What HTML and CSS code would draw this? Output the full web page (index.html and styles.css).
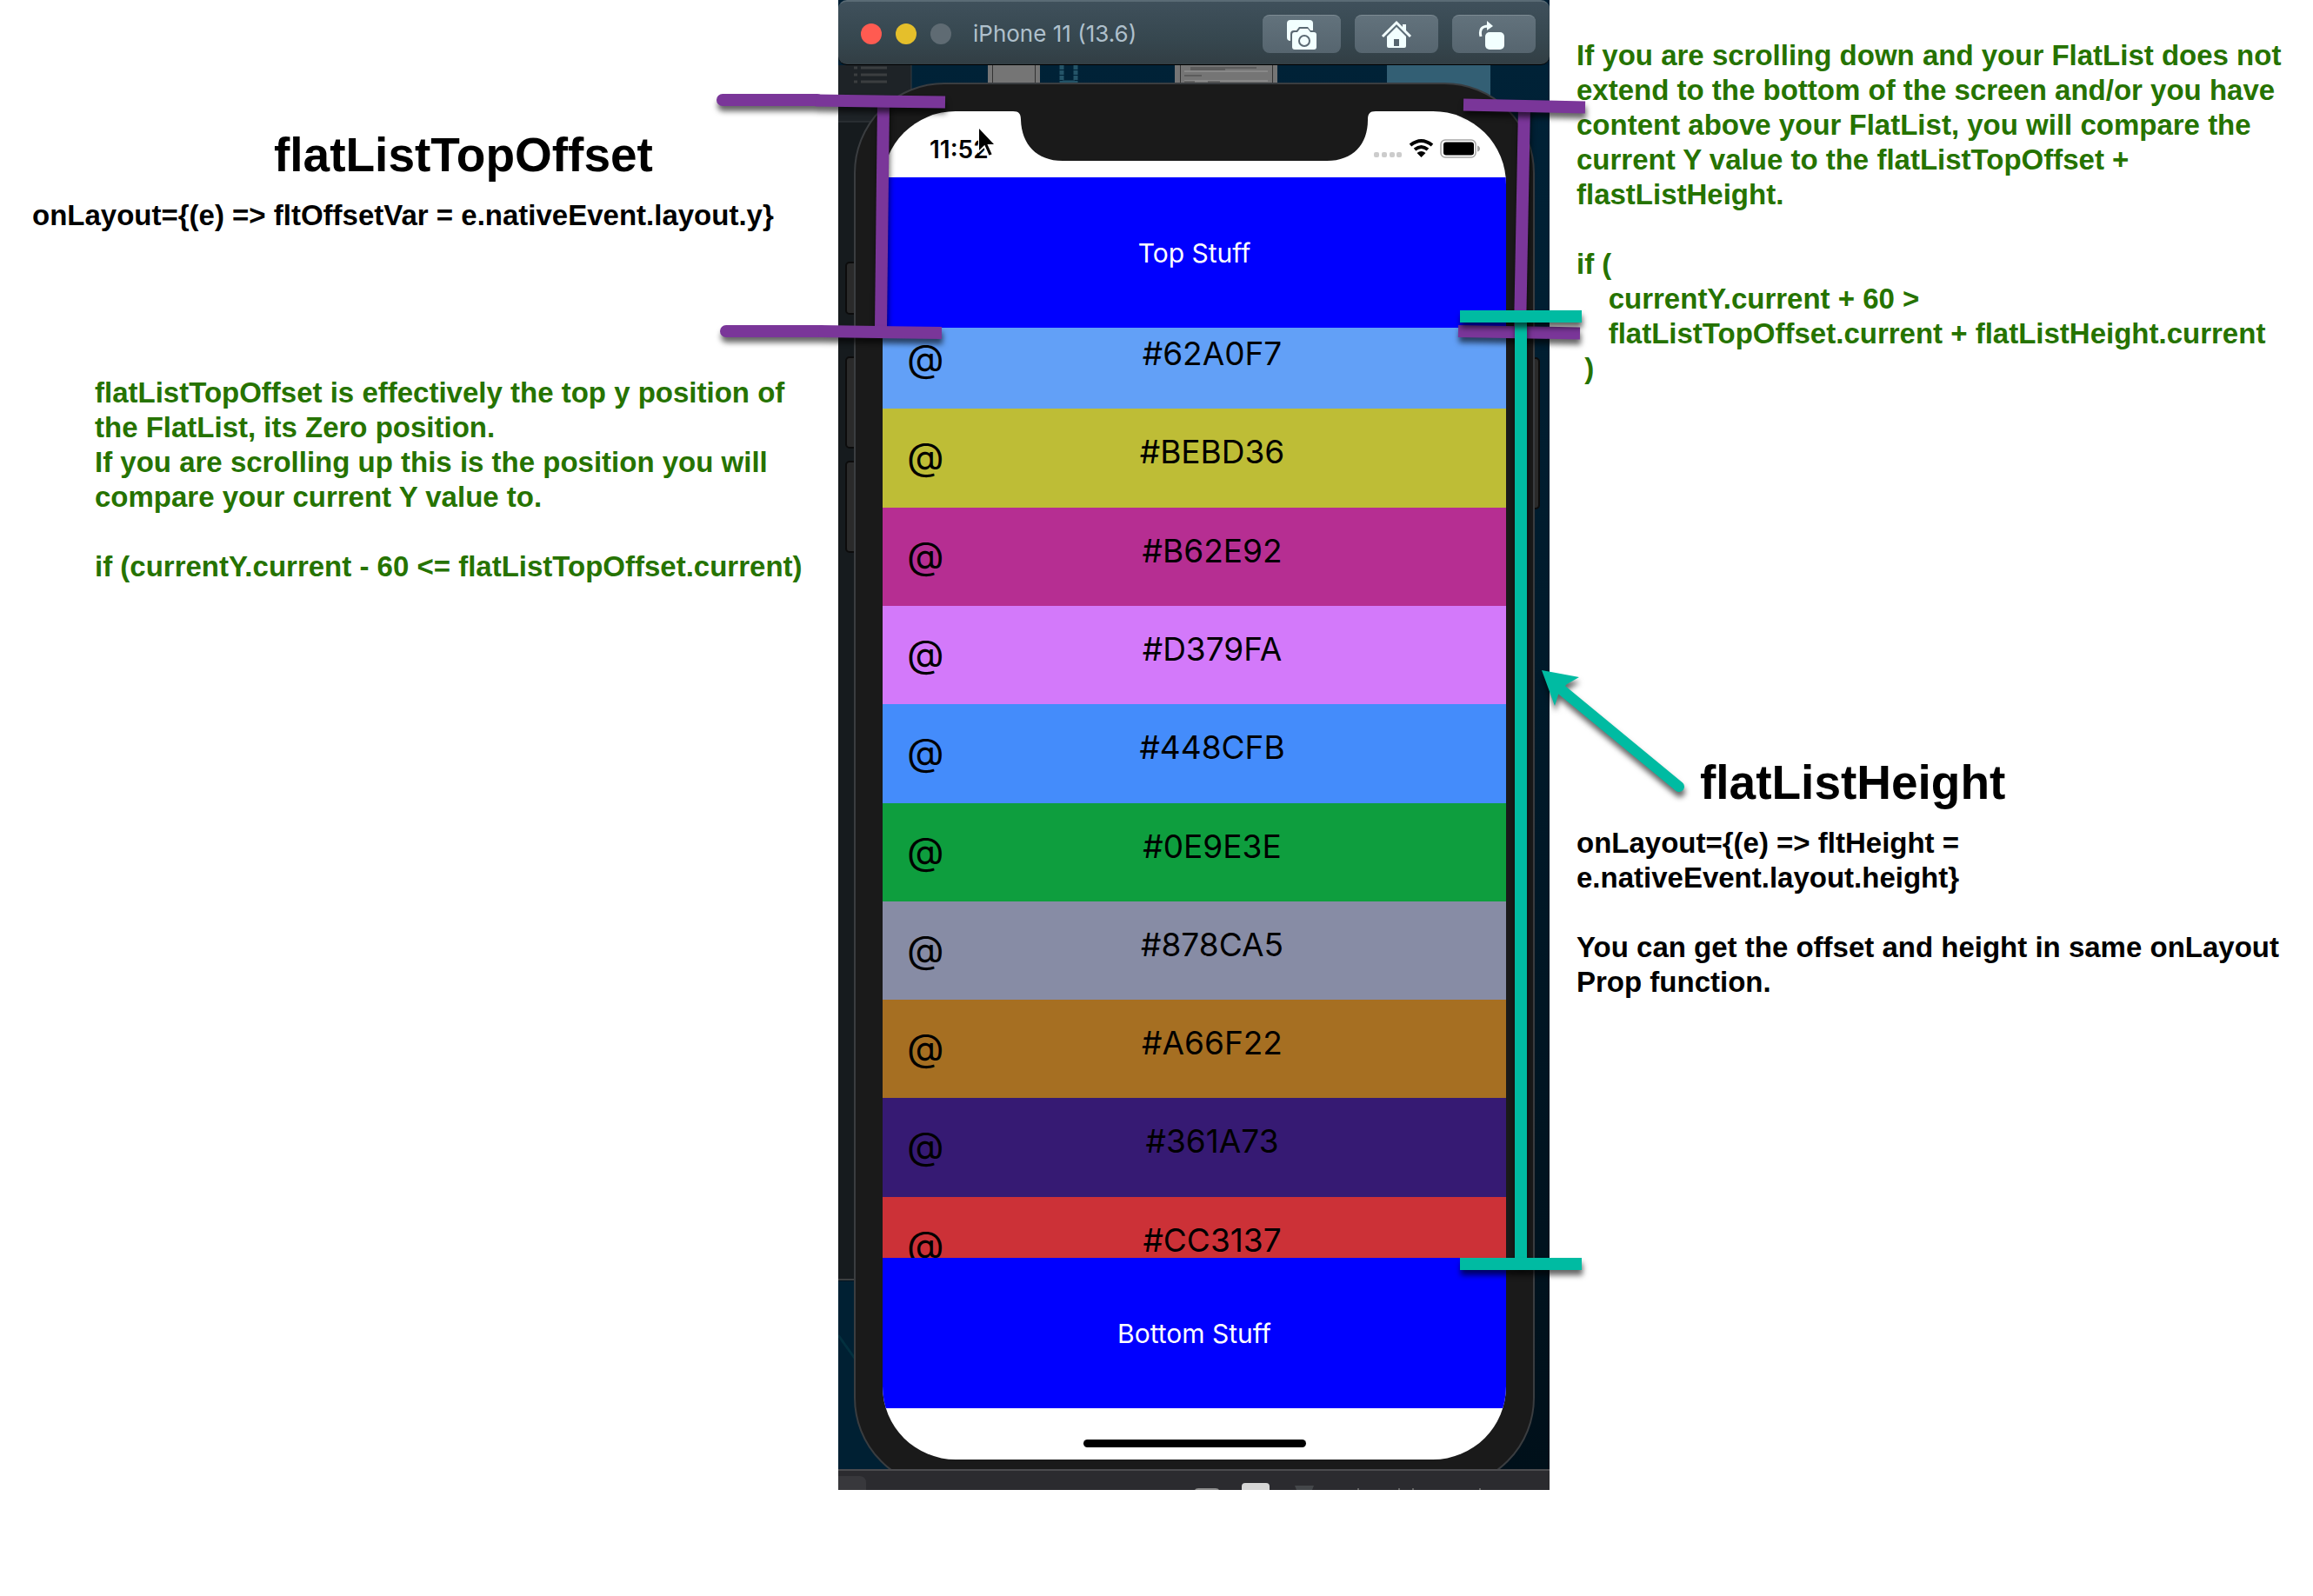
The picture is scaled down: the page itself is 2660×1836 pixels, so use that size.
FILE: index.html
```html
<!DOCTYPE html>
<html lang="en">
<head>
<meta charset="utf-8">
<title>FlatList layout offsets</title>
<link rel="stylesheet" href="styles.css">
</head>
<body>
<main class="board">
  <section class="notes notes-left">
    <h2 class="note-title title-offset">flatListTopOffset</h2>
    <p class="note">onLayout={(e) =&gt; fltOffsetVar = e.nativeEvent.layout.y}</p>
    <p class="note note-green note-offset">flatListTopOffset is effectively the top y position of
the FlatList, its Zero position.
If you are scrolling up this is the position you will
compare your current Y value to.

if (currentY.current - 60 &lt;= flatListTopOffset.current)</p>
  </section>

  <section class="simulator">
    <header class="titlebar">
      <span class="light light-close"></span>
      <span class="light light-min"></span>
      <span class="light light-max"></span>
      <h1 class="window-title">iPhone 11 (13.6)</h1>
      <button class="tool tool-shot" type="button" aria-label="Screenshot">
        <svg width="36" height="36" viewBox="0 0 36 36">
          <rect x="1" y="1" width="30" height="24" rx="4" fill="#f2ffff"/>
          <path d="M5 36V17q0-4 4-4h3l3-4h10l3 4h3q4 0 4 4v19z" fill="#5a6973"/>
          <path d="M7 32V18q0-3 3-3h3l3-4h9l3 4h4q3 0 3 3v14q0 3-3 3H10q-3 0-3-3z" fill="#f2ffff"/>
          <circle cx="21" cy="25" r="6" fill="#f2ffff" stroke="#5a6973" stroke-width="2"/>
        </svg>
      </button>
      <button class="tool" type="button" aria-label="Home">
        <svg width="36" height="36" viewBox="0 0 36 36">
          <path d="M2 20 18 4 34 20" fill="none" stroke="#f2ffff" stroke-width="3"/>
          <path d="M25 6h4v8l-4-4z" fill="#f2ffff"/>
          <path d="M18 9 29 20v11q0 2-2 2H9q-2 0-2-2V20z" fill="#f2ffff"/>
          <path d="M15 23h6v8h-6z" fill="#56656f"/>
        </svg>
      </button>
      <button class="tool" type="button" aria-label="Rotate">
        <svg width="36" height="36" viewBox="0 0 36 36">
          <rect x="8" y="15" width="22" height="20" rx="5" fill="#f2ffff"/>
          <path d="M3 20Q0 8 12 8" fill="none" stroke="#f2ffff" stroke-width="3"/>
          <path d="M10 2 17 8 10 13z" fill="#f2ffff"/>
        </svg>
      </button>
    </header>

    <div class="stage">
      <svg class="backdrop" width="818" height="1616" viewBox="0 74 818 1616">
        <defs>
          <linearGradient id="navy" x1="0" y1="0" x2="0" y2="1">
            <stop offset="0" stop-color="#002237"/>
            <stop offset="1" stop-color="#00101a"/>
          </linearGradient>
        </defs>
        <rect y="74" width="818" height="1616" fill="url(#navy)"/>
        <rect y="74" width="84" height="1397" fill="#161b1e"/>
        <path d="M0 74h84v65H0z" fill="#1e2327"/>
        <path d="M0 139h60M84 74v60" stroke="#373d40"/>
        <path d="M26 77h30M26 85h30M26 93h30" stroke="#3b3e40" stroke-width="3"/>
        <path d="M18 77h4M18 85h4M18 93h4" stroke="#3b3e40" stroke-width="3"/>
        <path d="M0 1471h40" stroke="#3c3f41" stroke-width="2"/>
        <path d="M0 1473h60v217H0z" fill="#002033"/>
        <path d="M0 1535 20 1563" stroke="#03303f" stroke-width="3"/>
        <path d="M172 74h60v24h-60zM387 74h118v24H387z" fill="#757575"/>
        <path d="M177.500 74v24M226.500 74v24M393.500 74v24M499.500 74v24" stroke="#333"/>
        <path d="M257 74v24M273 74v24" stroke="#245468" stroke-width="5" stroke-dasharray="5 1"/>
        <path d="M258 94h14" stroke="#245468" stroke-width="5"/>
        <path d="M398 81h96M398 92h96" stroke="#888" stroke-width="2"/>
        <path d="M405 77h76M405 79h40M398 86h20M398 93h12M425 93h14" stroke="#444" stroke-width="1"/>
        <path d="M631 74h119v40H631z" fill="#335f74"/>
      </svg>
      <svg class="keys" width="818" height="700" viewBox="0 74 818 700">
        <g fill="#2a2a2a" stroke="#0c0c0c" stroke-width="2">
          <rect x="9" y="301" width="20" height="59" rx="4"/>
          <rect x="9" y="410" width="20" height="104" rx="4"/>
          <rect x="9" y="530" width="20" height="104" rx="4"/>
          <rect x="786" y="411" width="20" height="173" rx="4"/>
        </g>
      </svg>

      <div class="phone">
        <div class="screen">
          <div class="status">
            <svg class="notch" width="717" height="60" viewBox="0 0 717 60">
              <path d="M150-1V0C157 0 159 3 159 10C160 38 177 57 207 57H511C541 57 558 38 558 10C558 3 560 0 567 0V-1Z" fill="#1a1a1a"/>
            </svg>
            <time class="clock">11:52</time>
            <svg width="122" height="26" viewBox="0 0 122 26">
              <g fill="#ccc">
                <rect x="0" y="17" width="6" height="6" rx="2"/>
                <rect x="9" y="17" width="6" height="6" rx="2"/>
                <rect x="18" y="17" width="6" height="6" rx="2"/>
                <rect x="26" y="17" width="6" height="6" rx="2"/>
              </g>
              <g fill="none" stroke="#000" stroke-width="4">
                <path d="M42 9Q54.500-1 67 9"/>
                <path d="M47 14Q54.500 8 62 14"/>
              </g>
              <path d="M49.500 18Q54.500 14 59.500 18L54.500 23Z"/>
              <rect x="77" y="3" width="40" height="20" rx="5" fill="#fff" stroke="#a6a6a6" stroke-width="1.500"/>
              <rect x="80" y="5.500" width="35" height="15" rx="3"/>
              <path d="M119 9.500q3 1 3 3.500t-3 3.500z" fill="#a6a6a6"/>
            </svg>
            <svg class="cursor" width="26" height="42" viewBox="0 0 26 42">
              <path d="M3 2V29L9 23.500 14 35 19 33 14 22H21Z" fill="#000" stroke="#fff" stroke-width="2"/>
              <path d="M3 3V28L9.500 21H20Z"/>
            </svg>
          </div>
          <div class="banner">Top Stuff</div>
          <div class="list">
            <ul class="rows">
              <li class="row" style="background:#62a0f7"><span class="at">@</span><span class="hex">#62A0F7</span></li>
              <li class="row" style="background:#bebd36"><span class="at">@</span><span class="hex">#BEBD36</span></li>
              <li class="row" style="background:#b62e92"><span class="at">@</span><span class="hex">#B62E92</span></li>
              <li class="row" style="background:#d379fa"><span class="at">@</span><span class="hex">#D379FA</span></li>
              <li class="row" style="background:#448cfb"><span class="at">@</span><span class="hex">#448CFB</span></li>
              <li class="row" style="background:#0e9e3e"><span class="at">@</span><span class="hex">#0E9E3E</span></li>
              <li class="row" style="background:#878ca5"><span class="at">@</span><span class="hex">#878CA5</span></li>
              <li class="row" style="background:#a66f22"><span class="at">@</span><span class="hex">#A66F22</span></li>
              <li class="row" style="background:#361a73"><span class="at">@</span><span class="hex">#361A73</span></li>
              <li class="row" style="background:#cc3137"><span class="at">@</span><span class="hex">#CC3137</span></li>
            </ul>
          </div>
          <div class="banner">Bottom Stuff</div>
          <div class="home"><span class="home-bar"></span></div>
        </div>
      </div>
    </div>

    <footer class="dock">
      <svg width="818" height="22" viewBox="0 0 818 22">
        <path d="M0 6h24q8 0 8 8v8H0z" fill="#38383c"/>
        <path d="M410 22q1-2 4-2h20q3 0 4 2z" fill="#8c8c8c"/>
        <path d="M464 22v-4q0-4 4-4h24q4 0 4 4v4z" fill="#d6d6d6"/>
        <path d="M525 17h22l-2 5h-18z" fill="#44474a"/>
        <path d="M597 21h2M644 21h2M660 21h2M737 21h2" stroke="#666" stroke-width="2"/>
      </svg>
    </footer>

    <svg class="marks" width="818" height="1714" viewBox="0 0 818 1714">
      <g class="purple">
        <path class="cast" d="M52 116.500 49 376"/>
        <g class="cast">
          <path class="round" d="M-133 115H-24M-129 381H-20"/>
          <path d="M-26 115.500 123 117.500M-22 381 119 383"/>
        </g>
        <path class="cast" d="M789 122 784 381"/>
        <path class="cast" d="M719 120.500 859 123.500M713 381 853 383.500"/>
      </g>
      <g class="teal">
        <path class="cast" d="M785 364V1454"/>
        <path class="cast" d="M715 364H855M715 1454H855"/>
        <g class="cast">
          <path class="round shaft" d="M830 792 967 905"/>
          <path class="head" d="M809 771 852 779 838 787 829 796 824 812Z"/>
        </g>
      </g>
    </svg>
  </section>

  <section class="notes notes-right">
    <p class="note note-green">If you are scrolling down and your FlatList does not
extend to the bottom of the screen and/or you have
content above your FlatList, you will compare the
current Y value to the flatListTopOffset +
flastListHeight.

if (
    currentY.current + 60 &gt;
    flatListTopOffset.current + flatListHeight.current
 )</p>
    <h2 class="note-title title-height">flatListHeight</h2>
    <p class="note">onLayout={(e) =&gt; fltHeight =
e.nativeEvent.layout.height}

You can get the offset and height in same onLayout
Prop function.</p>
  </section>
</main>
</body>
</html>
```
FILE: styles.css
```css
* {
  box-sizing: border-box;
}

body {
  margin: 0;
  background: #fff;
  color: #000;
  font-family: Inter, "Liberation Sans", sans-serif;
}

/* Notes on either side of the simulator window */
.board {
  display: grid;
  grid-template-columns: 964fr 818px 878fr;
  align-items: start;
}

.notes {
  display: flex;
  flex-direction: column;
  align-items: flex-start;
  min-width: 0;
  font-family: "Liberation Sans", Arial, sans-serif;
  font-weight: 700;
}

.notes-left {
  padding: 146px 0 0 37px;
}

.notes-right {
  padding: 44px 0 0 31px;
}

.note {
  margin: 0;
  font-size: 33px;
  line-height: 40px;
  white-space: pre;
}

.note-green {
  color: #267300;
}

.note-offset {
  margin: 164px 0 0 72px;
}

.note-title {
  margin: 0 0 18px;
  font-size: 55px;
  line-height: 64px;
}

.title-offset {
  margin-left: 278px;
}

.title-height {
  margin-top: 424px;
  margin-left: 142px;
}

/* Simulator window */
.simulator {
  position: relative;
  z-index: 1;
  background: #001f33;
}

.titlebar {
  display: flex;
  align-items: center;
  gap: 16px;
  height: 75px;
  padding: 2px 16px 0 26px;
  border-top: 2px solid #5a6b75;
  border-bottom: 1px solid #000;
  border-radius: 10px;
  background: linear-gradient(#3f505b, #36474f 60%, #323e44);
}

.light {
  width: 24px;
  height: 24px;
  border-radius: 50%;
}

.light-close {
  background: #ff5b51;
}

.light-min {
  background: #e5bf2b;
}

.light-max {
  background: #5f6b73;
}

.window-title {
  flex: 1;
  margin: 0 0 0 9px;
  color: #afc0cc;
  font-size: 26px;
  font-weight: 400;
  line-height: 32px;
}

.tool {
  display: flex;
  align-items: center;
  justify-content: center;
  width: 96px;
  height: 44px;
  padding: 0;
  border: 0;
  border-top: 1px solid #7d8b93;
  border-radius: 8px;
  background: linear-gradient(#62727c, #56656f);
}

.tool-shot {
  width: 90px;
}

.stage {
  position: relative;
  padding: 20px 17px 0 18px;
  overflow: hidden;
}

.backdrop,
.keys {
  position: absolute;
  top: 0;
  left: 0;
}

.phone {
  position: relative;
  margin-bottom: -22px;
  padding: 31px;
  border: 2px solid #3a3d40;
  border-radius: 104px;
  background: #1a1a1a;
}

.screen {
  overflow: hidden;
  border-radius: 84px;
  background: #fff;
}

.status {
  position: relative;
  display: flex;
  justify-content: space-between;
  height: 76px;
  padding: 30px 30px 0 54px;
}

.notch {
  position: absolute;
  top: 0;
  left: 0;
}

.cursor {
  position: absolute;
  top: 17px;
  left: 108px;
}

.clock {
  font-size: 28px;
  font-weight: 600;
  line-height: 28px;
}

.banner {
  display: flex;
  align-items: center;
  justify-content: center;
  height: 173px;
  background: #00f;
  color: #fff;
  font-size: 30px;
}

.list {
  height: 1070px;
  overflow: hidden;
}

/* The list is scrolled, so its first row starts above the visible area */
.rows {
  display: grid;
  grid-template-rows: repeat(10, 1fr);
  height: 1133px;
  margin: -20px 0 0;
  padding: 0;
  list-style: none;
}

.row {
  display: grid;
  grid-template-columns: 100px 1fr;
  align-items: start;
  padding: 24px 59px 0 0;
  line-height: 52px;
}

.at {
  padding: 5px 0 0 28px;
  font-size: 44px;
}

.hex {
  font-size: 37px;
  text-align: center;
}

.home {
  display: flex;
  justify-content: center;
  height: 59px;
  padding-top: 36px;
}

.home-bar {
  width: 256px;
  height: 9px;
  border-radius: 5px;
  background: #000;
}

.dock {
  position: relative;
  height: 24px;
  border-top: 2px solid #4b4b4e;
  background: #2b2b2f;
}

.dock svg {
  display: block;
}

/* Measuring brackets drawn over the window */
.marks {
  position: absolute;
  top: 0;
  left: 0;
  overflow: visible;
  fill: none;
  stroke-width: 14px;
  pointer-events: none;
}

.purple {
  stroke: #7a3699;
}

.teal {
  stroke: #00bba2;
}

.cast {
  filter: drop-shadow(1px 6px 3px rgba(0, 0, 0, 0.6));
}

.round {
  stroke-linecap: round;
}

.shaft {
  stroke-width: 12px;
}

.head {
  fill: #00bba2;
  stroke: none;
}
```
